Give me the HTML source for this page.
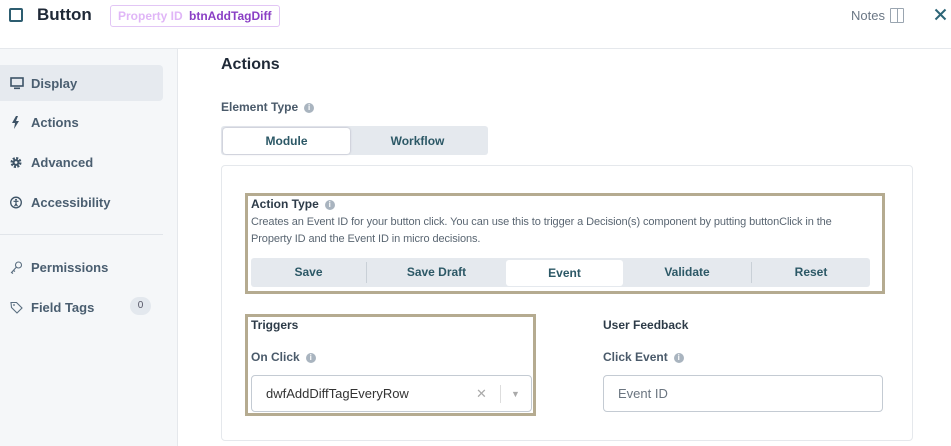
<!DOCTYPE html>
<html><head><style>
*{box-sizing:border-box;margin:0;padding:0}
body{width:951px;height:446px;overflow:hidden;background:#fff;font-family:"Liberation Sans",sans-serif;color:#2d3748;position:relative}
.abs{position:absolute}
.hdr{left:0;top:0;width:951px;height:49px;border-bottom:1px solid #e5e8ec}
.side{left:0;top:49px;width:178px;height:397px;background:#f5f7f9;border-right:1px solid #e5e8ec}
.nav{position:absolute;left:10px;font-size:13px;font-weight:bold;color:#4a5e70}
.ic{display:inline-block;width:21px;vertical-align:-2px}
.info{display:inline-block;width:10px;height:10px;border-radius:50%;background:#a9b4bf;color:#fff;font-size:8px;line-height:10px;text-align:center;vertical-align:middle;margin-left:6px;font-weight:bold}
.lbl{font-size:12px;font-weight:bold;color:#4a5a6a}
.seg{font-size:12px;font-weight:bold;color:#2c5866;text-align:center;line-height:26px;position:absolute;top:0}
</style></head><body>
<div class="abs hdr"></div>
<div class="abs" style="left:9px;top:8px;width:14px;height:14px;border:2px solid #2d5d70;border-radius:2px"></div>
<div class="abs" style="left:37px;top:5px;font-size:17px;font-weight:bold;color:#1f2937">Button</div>
<div class="abs" style="left:110px;top:5px;width:170px;height:22px;border:1px solid #e2c6f5;border-radius:3px;font-size:12px;font-weight:bold;line-height:20px;padding-left:7px;color:#e0b6f7">Property ID <span style="color:#8a3fc5;margin-left:3px">btnAddTagDiff</span></div>
<div class="abs" style="left:851px;top:8px;font-size:13px;color:#6b7785">Notes</div>
<div class="abs" style="left:890px;top:8px;width:14px;height:15px;border:1px solid #9aa5b0;border-radius:1px"><div style="position:absolute;left:6px;top:0;width:1px;height:13px;background:#9aa5b0"></div></div>
<svg class="abs" style="left:934px;top:8px" width="13" height="13"><path d="M1.5 1.5L11.5 11.5M11.5 1.5L1.5 11.5" stroke="#2d6577" stroke-width="2"/></svg>

<div class="abs side">
<div class="abs" style="left:0;top:16px;width:163px;height:36px;background:#e6eaef;border-radius:0 4px 4px 0"></div>
<div class="nav" style="top:27px"><svg class="ic" width="21" height="13"><rect x="1" y="1" width="12" height="8" fill="none" stroke="#3d5366" stroke-width="1.6"/><rect x="4" y="10.5" width="6" height="1.6" fill="#3d5366"/></svg>Display</div>
<div class="nav" style="top:66px"><svg class="ic" width="21" height="13"><path d="M6 0L2 7H5L4 13L9 5H6L8 0Z" fill="#3d5366"/></svg>Actions</div>
<div class="nav" style="top:106px"><svg class="ic" width="21" height="13"><circle cx="6" cy="6.5" r="4.2" fill="none" stroke="#3d5366" stroke-width="2.6" stroke-dasharray="2 1.3"/><circle cx="6" cy="6.5" r="3.4" fill="#3d5366"/><circle cx="6" cy="6.5" r="1.4" fill="#f5f7f9"/></svg>Advanced</div>
<div class="nav" style="top:146px"><svg class="ic" width="21" height="13"><circle cx="6" cy="6.5" r="5.3" fill="none" stroke="#3d5366" stroke-width="1.3"/><circle cx="6" cy="3.7" r="1" fill="#3d5366"/><path d="M3.5 5.3H8.5M6 5.3V8M6 8L4.5 10.3M6 8L7.5 10.3" stroke="#3d5366" stroke-width="1.2" fill="none"/></svg>Accessibility</div>
<div class="abs" style="left:0;top:185px;width:163px;height:1px;background:#e1e5ea"></div>
<div class="nav" style="top:211px"><svg class="ic" width="21" height="13"><circle cx="8.5" cy="4" r="3" fill="none" stroke="#5a6e80" stroke-width="1.1"/><path d="M6.5 6L1.5 11.5L3 12.5M3.5 9.5L5 10.5" stroke="#5a6e80" stroke-width="1.1" fill="none"/></svg>Permissions</div>
<div class="nav" style="top:251px"><svg class="ic" width="21" height="13"><path d="M1 1.5H6.5L12 7L7 12L1.5 6.5Z" fill="none" stroke="#5a6e80" stroke-width="1.1"/><circle cx="4" cy="4" r="0.9" fill="#5a6e80"/></svg>Field Tags</div>
<div class="abs" style="left:130px;top:248px;width:21px;height:18px;border-radius:9px;background:#e3e8ee;font-size:10px;color:#556;text-align:center;line-height:18px">0</div>
</div>

<div class="abs" style="left:221px;top:56px;font-size:16px;font-weight:bold;color:#1f2937">Actions</div>
<div class="abs lbl" style="left:221px;top:100px">Element Type<span class="info">i</span></div>
<div class="abs" style="left:221px;top:126px;width:267px;height:29px;background:#e5e9ee;border-radius:3px">
<div class="seg" style="left:2px;top:2px;width:127px;background:#fff;border-radius:3px;box-shadow:0 0 2px #aab">Module</div>
<div class="seg" style="left:133px;top:2px;width:127px">Workflow</div>
</div>
<div class="abs" style="left:221px;top:165px;width:692px;height:276px;border:1px solid #e5e8ec;border-radius:4px"></div>

<div class="abs" style="left:245px;top:193px;width:640px;height:101px;border:3px solid #b5ab90"></div>
<div class="abs lbl" style="left:251px;top:197px;color:#2d3b48">Action Type<span class="info">i</span></div>
<div class="abs" style="left:251px;top:214px;font-size:11px;line-height:17px;color:#5a6672;width:622px;letter-spacing:-0.1px">Creates an Event ID for your button click. You can use this to trigger a Decision(s) component by putting buttonClick in the Property ID and the Event ID in micro decisions.</div>
<div class="abs" style="left:251px;top:258px;width:619px;height:29px;background:#e5e9ee;border-radius:3px">
<div class="seg" style="left:0;top:1px;width:115px">Save</div>
<div style="position:absolute;left:115px;top:4px;width:1px;height:21px;background:#c9d0d7"></div>
<div class="seg" style="left:116px;top:1px;width:139px">Save Draft</div>
<div class="seg" style="left:255px;top:2px;width:117px;background:#fff;border-radius:3px">Event</div>
<div class="seg" style="left:372px;top:1px;width:128px">Validate</div>
<div style="position:absolute;left:500px;top:4px;width:1px;height:21px;background:#c9d0d7"></div>
<div class="seg" style="left:501px;top:1px;width:118px">Reset</div>
</div>

<div class="abs" style="left:245px;top:314px;width:291px;height:102px;border:3px solid #b5ab90"></div>
<div class="abs lbl" style="left:251px;top:318px;color:#2d3b48">Triggers</div>
<div class="abs lbl" style="left:251px;top:350px">On Click<span class="info">i</span></div>
<div class="abs" style="left:251px;top:375px;width:281px;height:37px;border:1px solid #c4cbd3;border-radius:4px;font-size:13px;color:#333;line-height:35px;padding-left:14px">dwfAddDiffTagEveryRow
<span style="position:absolute;left:224px;top:0;color:#aaa;font-size:13px">✕</span>
<span style="position:absolute;left:248px;top:9px;width:1px;height:18px;background:#ddd"></span>
<span style="position:absolute;left:259px;top:1px;color:#aaa;font-size:9px">▼</span></div>

<div class="abs lbl" style="left:603px;top:318px;color:#2d3b48">User Feedback</div>
<div class="abs lbl" style="left:603px;top:350px">Click Event<span class="info">i</span></div>
<div class="abs" style="left:603px;top:375px;width:280px;height:37px;border:1px solid #c4cbd3;border-radius:4px;font-size:13px;color:#6b7580;line-height:35px;padding-left:14px">Event ID</div>
</body></html>
